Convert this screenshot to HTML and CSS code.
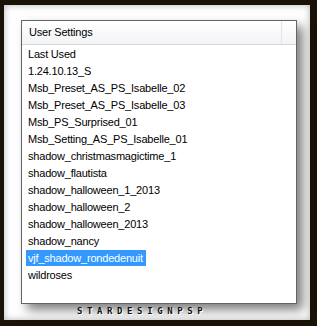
FILE: index.html
```html
<!doctype html>
<html>
  <head>
    <title>User Settings</title>
    <link rel="stylesheet" href="styles.css">
  </head>
  <body>
    <div class="frame">
      <div class="panel">
        <div class="panel-head">
          <div class="head-cell">User Settings</div>
          <div class="head-rest"></div>
        </div>
        <ul class="list">
          <li>Last Used</li>
          <li>1.24.10.13_S</li>
          <li>Msb_Preset_AS_PS_Isabelle_02</li>
          <li>Msb_Preset_AS_PS_Isabelle_03</li>
          <li>Msb_PS_Surprised_01</li>
          <li>Msb_Setting_AS_PS_Isabelle_01</li>
          <li>shadow_christmasmagictime_1</li>
          <li>shadow_flautista</li>
          <li>shadow_halloween_1_2013</li>
          <li>shadow_halloween_2</li>
          <li>shadow_halloween_2013</li>
          <li>shadow_nancy</li>
          <li><span class="selected">vjf_shadow_rondedenuit</span></li>
          <li>wildroses</li>
        </ul>
      </div>
      <div class="caption">STARDESIGNPSP</div>
    </div>
  </body>
</html>
```
FILE: styles.css
```css
html, body {
    margin: 0;
    padding: 0;
    width: 100%;
    height: 100%;
    background-color: #1a1207;
}

.frame {
    box-sizing: border-box;
    margin: 5px 7px 0 4px;
    height: 315px;
    padding: 15px 0 0 17px;
    background-color: #ffffff;
    box-shadow: inset 0 0 7px rgba(0, 0, 0, 0.3);
}

.panel {
    box-sizing: border-box;
    width: 276px;
    height: 284px;
    border: 1px solid #646464;
    background-color: #fff;
    box-shadow: 6px 6px 10px rgba(0, 0, 0, 0.5);
    font-family: "Liberation Sans", Arial, sans-serif;
    font-size: 11px;
    letter-spacing: -0.2px;
    color: #000;
}

.panel-head {
    display: flex;
    height: 23px;
    border-bottom: 1px solid #d5d5d5;
    background: linear-gradient(#ffffff, #f3f4f6);
}

.head-cell {
    flex: 1;
    padding: 5px 0 0 7px;
    border-right: 1px solid #e3e5e8;
}

.head-rest {
    width: 14px;
}

.list {
    list-style: none;
    margin: 0;
    padding: 1px 0 0 4px;
}

.list li {
    height: 17px;
    line-height: 17px;
    padding-left: 2px;
}

.list li .selected {
    display: inline-block;
    margin-left: -2px;
    padding: 0 3px 0 2px;
    height: 16px;
    line-height: 16px;
    background-color: #3399ff;
    color: #fff;
}

.caption {
    margin: 3px 0 0 56px;
    font-family: "DejaVu Sans Mono", monospace;
    font-size: 9px;
    font-weight: bold;
    letter-spacing: 4.6px;
    line-height: 9px;
    color: #111;
    text-shadow: 1px 1px 0 #fff;
}
```
